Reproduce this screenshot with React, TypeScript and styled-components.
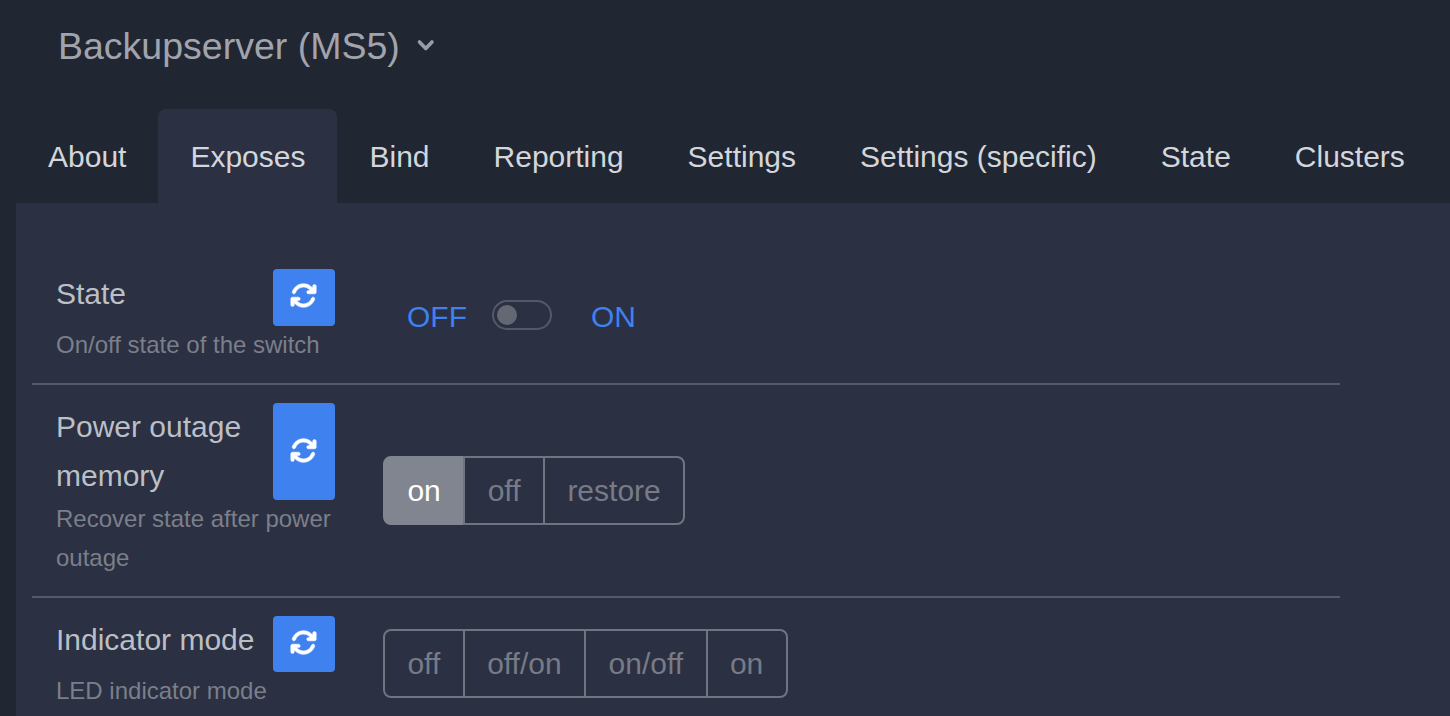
import styled, { createGlobalStyle } from 'styled-components';
import { FaArrowsRotate } from 'react-icons/fa6';

const GlobalStyle = createGlobalStyle`
  html, body {
    margin: 0;
    height: 100%;
    overflow: hidden;
    background: #212633;
  }

  body {
    font-family: "Liberation Sans", Arial, sans-serif;
  }
`;

const Page = styled.div`
  height: 716px;
  overflow: hidden;
  background: #212633;
  padding-left: 16px;
`;

const Header = styled.div`
  display: flex;
  align-items: center;
  height: 109px;
  padding: 0 0 17px 42px;
  box-sizing: border-box;
`;

const DeviceName = styled.div`
  font-size: 37.5px;
  line-height: 56px;
  color: #a1a4ac;
`;

const Chevron = styled.svg`
  width: 20px;
  height: 20px;
  margin-left: 16px;
  fill: none;
  stroke: #9a9da6;
  stroke-width: 3.6;
  stroke-linecap: round;
  stroke-linejoin: round;
`;

const Tabs = styled.div`
  display: flex;
  height: 94px;
`;

const Tab = styled.div<{ $active?: boolean }>`
  padding: 0 32px;
  font-size: 30px;
  line-height: 95px;
  color: #d3d6db;
  border-radius: 8px 8px 0 0;
  background: ${(p) => (p.$active ? '#2b3042' : 'transparent')};
`;

const Panel = styled.div`
  background: #2b3042;
  padding: 48px 110px 0 16px;
  min-height: 600px;
`;

const Row = styled.div`
  display: grid;
  grid-template-columns: 327px 1fr;
  box-sizing: border-box;
  min-height: 133.75px;
  border-bottom: 2px solid #555a68;
  padding: 18px 0 18.5px;

  &:last-child {
    min-height: 0;
    border-bottom: 0;
  }
`;

const Label = styled.div`
  padding: 0 24px;
`;

const TitleRow = styled.div`
  display: flex;
  gap: 8px;
  align-items: stretch;
  margin-bottom: -1px;
`;

const Title = styled.div`
  flex: 1;
  padding-top: 0.5px;
  font-size: 30px;
  line-height: 48.5px;
  color: #bcbfc6;
`;

const RefreshButton = styled.button`
  flex: 0 0 62px;
  min-height: 56.5px;
  padding: 0 2px 3px 0;
  border: 0;
  border-radius: 4px;
  background: #3f81ef;
  color: #fff;
  display: flex;
  align-items: center;
  justify-content: center;
  font-size: 27px;

  svg {
    stroke: currentColor;
    stroke-width: 12px;
  }
`;

const Description = styled.div`
  font-size: 24px;
  line-height: 39px;
  color: #7b7f8a;
`;

const Value = styled.div`
  display: flex;
  align-items: center;
  padding: 0 24px;
`;

const ToggleWrap = styled.div`
  display: flex;
  align-items: center;
  padding-left: 24px;
  font-size: 30px;
  line-height: 45px;
  color: #3f81ef;
`;

const Switch = styled.div`
  box-sizing: border-box;
  width: 60px;
  height: 30px;
  margin: 0 39px 4px 25px;
  padding: 3px;
  border: 2px solid #555967;
  border-radius: 15px;
`;

const Knob = styled.div`
  width: 20px;
  height: 20px;
  border-radius: 50%;
  background: #646873;
`;

const Segments = styled.div`
  display: inline-flex;
`;

const Segment = styled.button<{ $active?: boolean }>`
  padding: 10px 22.45px;
  margin-left: -2px;
  border: 2px solid #6f7480;
  border-radius: 0;
  font-family: inherit;
  font-size: 30px;
  line-height: 45px;
  color: ${(p) => (p.$active ? '#fff' : '#767b87')};
  background: ${(p) => (p.$active ? '#808590' : 'transparent')};
  border-color: ${(p) => (p.$active ? '#808590' : '#6f7480')};

  &:first-child {
    margin-left: 0;
    border-radius: 8px 0 0 8px;
  }

  &:last-child {
    border-radius: 0 8px 8px 0;
  }
`;

const tabs = ['About', 'Exposes', 'Bind', 'Reporting', 'Settings', 'Settings (specific)', 'State', 'Clusters'];

const Refresh = () => (
  <RefreshButton>
    <FaArrowsRotate />
  </RefreshButton>
);

export default function App() {
  return (
    <Page>
      <GlobalStyle />
      <Header>
        <DeviceName>Backupserver (MS5)</DeviceName>
        <Chevron viewBox="0 0 20 20">
          <path d="M3.5 6 9.8 12.5 16 6" />
        </Chevron>
      </Header>
      <Tabs>
        {tabs.map((t) => (
          <Tab key={t} $active={t === 'Exposes'}>
            {t}
          </Tab>
        ))}
      </Tabs>
      <Panel>
        <Row>
          <Label>
            <TitleRow>
              <Title>State</Title>
              <Refresh />
            </TitleRow>
            <Description>On/off state of the switch</Description>
          </Label>
          <Value>
            <ToggleWrap>
              OFF
              <Switch>
                <Knob />
              </Switch>
              ON
            </ToggleWrap>
          </Value>
        </Row>
        <Row>
          <Label>
            <TitleRow>
              <Title>Power outage memory</Title>
              <Refresh />
            </TitleRow>
            <Description>Recover state after power outage</Description>
          </Label>
          <Value>
            <Segments>
              <Segment $active>on</Segment>
              <Segment>off</Segment>
              <Segment>restore</Segment>
            </Segments>
          </Value>
        </Row>
        <Row>
          <Label>
            <TitleRow>
              <Title>Indicator mode</Title>
              <Refresh />
            </TitleRow>
            <Description>LED indicator mode</Description>
          </Label>
          <Value>
            <Segments>
              <Segment>off</Segment>
              <Segment>off/on</Segment>
              <Segment>on/off</Segment>
              <Segment>on</Segment>
            </Segments>
          </Value>
        </Row>
      </Panel>
    </Page>
  );
}
